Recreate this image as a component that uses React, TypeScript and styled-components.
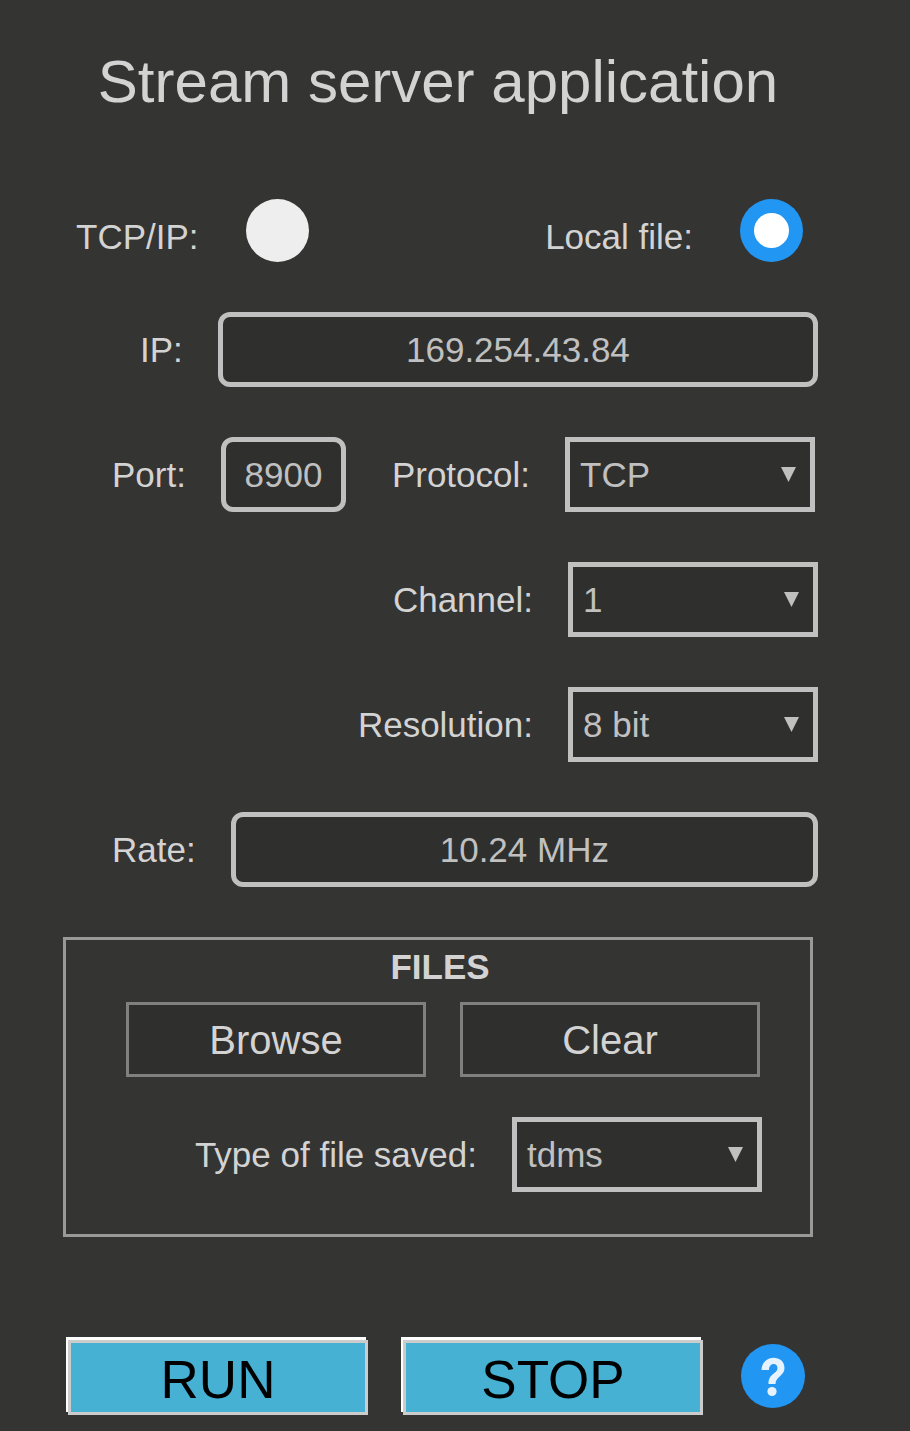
import React, { useState } from "react";
import styled, { createGlobalStyle } from "styled-components";

const GlobalStyle = createGlobalStyle`
  *, *::before, *::after { box-sizing: border-box; }
  body {
    margin: 0;
    background: #343432;
    color: #d3d3d3;
    font-family: "Liberation Sans", Arial, sans-serif;
    font-size: 35px;
  }
`;

const Page = styled.main`
  display: flex;
  flex-direction: column;
  gap: 50px;
  padding: 47px 92px 16px 63px;
`;

const Title = styled.h1`
  margin: 0 5px 32px 0;
  font-size: 60px;
  font-weight: 400;
  line-height: 70px;
  text-align: center;
`;

const ModeRow = styled.div`
  display: flex;
  justify-content: space-between;
  align-items: flex-end;
  padding: 0 15px 0 13px;
`;

const ModeOption = styled.div`
  display: flex;
  align-items: flex-end;
  gap: 47px;
  line-height: 50px;
`;

const Radio = styled.input`
  appearance: none;
  display: grid;
  place-items: center;
  width: 63px;
  height: 63px;
  margin: 0;
  border-radius: 50%;
  background: #eee;
  cursor: pointer;

  &:checked { background: #2196f3; }
  &:checked::before {
    content: "";
    width: 35px;
    height: 35px;
    border-radius: 50%;
    background: #fff;
  }
`;

const Row = styled.div<{ $left?: number; $right?: number }>`
  display: flex;
  justify-content: flex-end;
  align-items: center;
  gap: 35px;
  padding-left: ${(p) => p.$left ?? 0}px;
  padding-right: ${(p) => p.$right ?? 0}px;
`;

const Label = styled.label`
  white-space: nowrap;
`;

const TextField = styled.input`
  flex: 1;
  min-width: 0;
  height: 75px;
  padding: 0 10px;
  border: 5px solid #c0c0c0;
  border-radius: 12px;
  background: #2f2f2d;
  color: #c0c0c0;
  font: inherit;
  text-align: center;
`;

const PortField = styled(TextField)`
  flex: 0 0 125px;
  margin-right: auto;
`;

const SelectBox = styled.div`
  position: relative;
  flex: 0 0 250px;
  height: 75px;
`;

const Select = styled.select`
  appearance: none;
  width: 100%;
  height: 100%;
  padding: 0 50px 0 10px;
  border: 5px solid #c0c0c0;
  border-radius: 0;
  background: #2f2f2d;
  color: #c0c0c0;
  font: inherit;
`;

const Arrow = styled.svg`
  position: absolute;
  top: 30px;
  right: 19px;
  width: 15px;
  height: 15px;
  fill: #c0c0c0;
  pointer-events: none;
`;

const Files = styled.section`
  margin-right: 5px;
  padding-bottom: 42px;
  border: 3px solid #999;
`;

const FilesTitle = styled.h2`
  margin: 0 0 8px;
  padding-left: 4px;
  font-size: 35px;
  line-height: 54px;
  text-align: center;
`;

const FilesBody = styled.div`
  display: flex;
  flex-direction: column;
  gap: 40px;
  padding: 0 48px 0 60px;
`;

const FileButtons = styled.div`
  display: flex;
  gap: 34px;
  padding-right: 2px;
`;

const FileButton = styled.button`
  flex: 1;
  height: 75px;
  padding: 2px 0 0;
  border: 3px solid #808080;
  background: #2f2f2d;
  color: #d3d3d3;
  font-family: inherit;
  font-size: 40px;
  cursor: pointer;
`;

const Actions = styled.div`
  display: flex;
  align-items: flex-start;
  gap: 35px;
  margin-top: 53px;
  padding: 0 13px 0 5px;
`;

const ActionButton = styled.button`
  flex: 1;
  height: 75px;
  padding: 5px 0 0;
  border: 3px solid #ccc;
  background: #46b1d3;
  box-shadow: -2px -3px 0 #fff;
  color: #000;
  font-family: inherit;
  font-size: 53px;
  line-height: 60px;
  cursor: pointer;
`;

const HelpButton = styled.button`
  width: 64px;
  height: 64px;
  margin: 4px 0 0 3px;
  padding: 0;
  border: 0;
  background: none;
  cursor: pointer;

  svg { display: block; width: 100%; height: 100%; }
`;

type DropdownProps = { id: string; options: string[] };

function Dropdown({ id, options }: DropdownProps) {
  return (
    <SelectBox>
      <Select id={id} defaultValue={options[0]}>
        {options.map((o) => (
          <option key={o}>{o}</option>
        ))}
      </Select>
      <Arrow viewBox="0 0 15 15" aria-hidden="true">
        <path d="M0 0H15L7.5 15Z" />
      </Arrow>
    </SelectBox>
  );
}

export default function App() {
  const [mode, setMode] = useState("file");
  return (
    <>
      <GlobalStyle />
      <Page>
        <Title>Stream server application</Title>
        <ModeRow role="radiogroup" aria-label="Destination">
          <ModeOption>
            <Label htmlFor="mode-net">TCP/IP:</Label>
            <Radio id="mode-net" type="radio" name="mode" checked={mode === "net"} onChange={() => setMode("net")} />
          </ModeOption>
          <ModeOption>
            <Label htmlFor="mode-file">Local file:</Label>
            <Radio id="mode-file" type="radio" name="mode" checked={mode === "file"} onChange={() => setMode("file")} />
          </ModeOption>
        </ModeRow>
        <Row $left={77}>
          <Label htmlFor="ip">IP:</Label>
          <TextField id="ip" type="text" defaultValue="169.254.43.84" />
        </Row>
        <Row $left={49} $right={3}>
          <Label htmlFor="port">Port:</Label>
          <PortField id="port" type="text" defaultValue="8900" />
          <Label htmlFor="protocol">Protocol:</Label>
          <Dropdown id="protocol" options={["TCP", "UDP"]} />
        </Row>
        <Row>
          <Label htmlFor="channel">Channel:</Label>
          <Dropdown id="channel" options={["1", "2"]} />
        </Row>
        <Row>
          <Label htmlFor="resolution">Resolution:</Label>
          <Dropdown id="resolution" options={["8 bit", "16 bit"]} />
        </Row>
        <Row $left={49}>
          <Label htmlFor="rate">Rate:</Label>
          <TextField id="rate" type="text" defaultValue="10.24 MHz" />
        </Row>
        <Files>
          <FilesTitle>FILES</FilesTitle>
          <FilesBody>
            <FileButtons>
              <FileButton type="button">Browse</FileButton>
              <FileButton type="button">Clear</FileButton>
            </FileButtons>
            <Row>
              <Label htmlFor="filetype">Type of file saved:</Label>
              <Dropdown id="filetype" options={["tdms", "wav"]} />
            </Row>
          </FilesBody>
        </Files>
        <Actions>
          <ActionButton type="button">RUN</ActionButton>
          <ActionButton type="button">STOP</ActionButton>
          <HelpButton type="button" aria-label="Help">
            <svg viewBox="0 0 64 64" aria-hidden="true">
              <circle cx="32" cy="32" r="32" fill="#2196f3" />
              <path
                d="M20.500 26C21 10 43.500 10 43.500 24C43.500 32 34.500 32.500 34.500 40H27.500C27.500 29 36.500 30 36.500 24C36.500 18.500 28 18.500 28 26Z"
                fill="#e6f3fe"
              />
              <circle cx="31" cy="47.500" r="4.600" fill="#e6f3fe" />
            </svg>
          </HelpButton>
        </Actions>
      </Page>
    </>
  );
}
